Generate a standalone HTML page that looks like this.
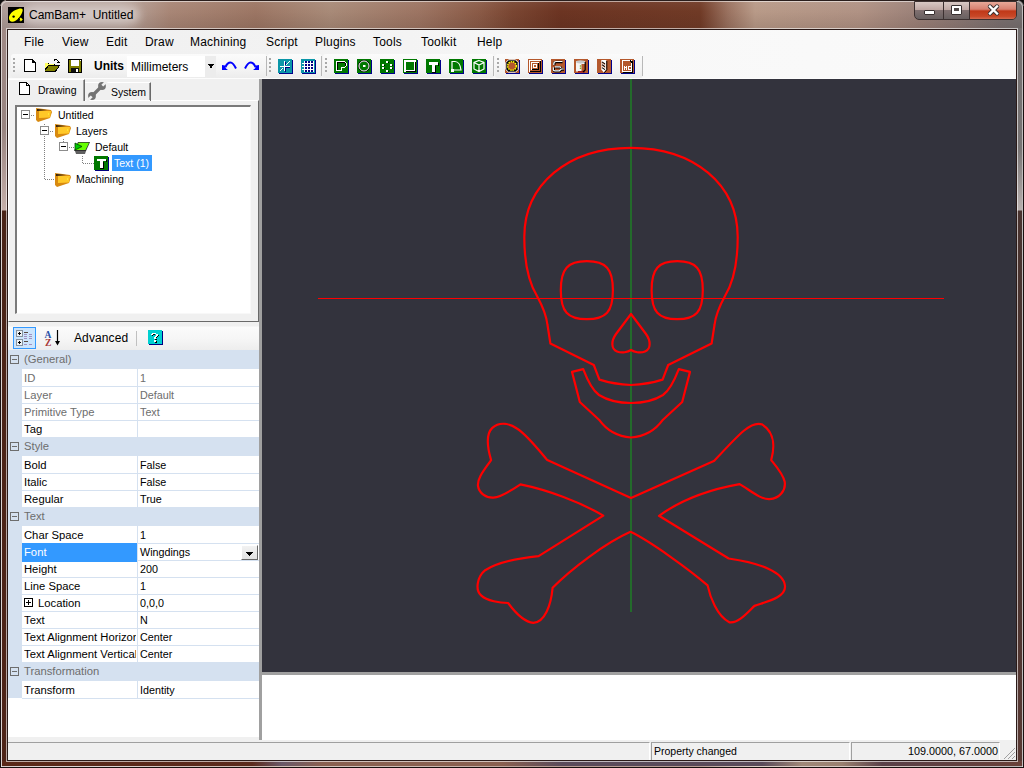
<!DOCTYPE html>
<html><head><meta charset="utf-8">
<style>
*{margin:0;padding:0;box-sizing:border-box}
html,body{width:1024px;height:768px;overflow:hidden;background:#000}
body{position:relative;font-family:"Liberation Sans",sans-serif;font-size:12px;color:#000}
.a{position:absolute}
.t{position:absolute;white-space:nowrap;line-height:14px;height:14px}
svg{position:absolute;overflow:visible}
#frame{left:0;top:0;width:1024px;height:768px;border-radius:7px 7px 0 0;
 background:linear-gradient(90deg,#ac9a96 0px,#b8a8a4 40px,#b8a69e 120px,#a88676 170px,#9c7664 256px,#a88a78 330px,#9c7462 420px,#8a5a46 480px,#7a4632 512px,#6c3422 560px,#703a26 700px,#9a7260 728px,#b89a88 755px,#b09284 860px,#9a8078 920px,#7a7070 1000px,#747070 1024px)}
.menu{top:30px;height:24px;left:8px;width:1008px;background:linear-gradient(90deg,#f0f0f0 0,#f2f2f2 300px,#f8f8f8 600px,#fafafa 1008px)}
.mi{position:absolute;top:35px;font-size:12px;line-height:14px;color:#000;white-space:nowrap;letter-spacing:0.2px}
.tb{position:absolute;top:54px;height:24px;background:linear-gradient(180deg,#fbfbfb 0,#f4f4f4 60%,#ececec 100%);border-radius:3px}
.tb:after{content:"";position:absolute;right:0;top:2px;width:1px;height:20px;background:#b8b8b8}
.grip{position:absolute;top:58px;width:2px;height:15px;background:repeating-linear-gradient(180deg,#a8a8a8 0,#a8a8a8 2px,transparent 2px,transparent 4px)}
.ic{position:absolute;top:59px;width:16px;height:16px}
.ic i{position:absolute;left:1px;top:1px;width:14px;height:14px;background:#00008a}
.ic b{position:absolute;left:0;top:0;width:14px;height:14px}
.g b{background:#007800}
.br b{background:#b4582c}
.tl b{background:#0a96a8}
.ic svg{left:0;top:0}
.gt{font-size:11.25px}
.gv{font-size:10.75px}
.gc{color:#6d6d6d}
</style></head><body>
<div id="frame" class="a"></div>
<!-- frame lines -->
<div class="a" style="left:0;top:0;width:1024px;height:29px;background:linear-gradient(180deg,rgba(255,255,255,.06) 0,rgba(0,0,0,0) 40%,rgba(40,20,15,.12) 100%)"></div>
<div class="a" style="left:6px;top:0;width:1012px;height:1px;background:#2a1e1c"></div>
<div class="a" style="left:22px;top:6px;width:118px;height:18px;border-radius:9px;background:rgba(235,228,225,.55);filter:blur(4px)"></div>
<div class="a" style="left:0;top:6px;width:1px;height:762px;background:#1a1010"></div>
<div class="a" style="left:1023px;top:6px;width:1px;height:762px;background:#1a1010"></div>
<div class="a" style="left:0;top:767px;width:1024px;height:1px;background:#1a1010"></div>
<div class="a" style="left:1px;top:1px;width:1022px;height:766px;border:1px solid rgba(255,255,255,.55);border-radius:6px 6px 0 0;border-bottom:none"></div>
<div class="a" style="left:1px;top:766px;width:1022px;height:1px;background:rgba(255,255,255,.5)"></div>
<!-- left/right/bottom frame color -->
<div class="a" style="left:2px;top:28px;width:5px;height:738px;background:linear-gradient(180deg,#a08a86 0,#988480 100px,#c4aea8 182px,#4a2418 183px,#4e2418 738px)"></div>
<div class="a" style="left:1017px;top:28px;width:5px;height:738px;background:linear-gradient(180deg,#747070 0,#787474 120px,#b8b0ae 182px,#4a3430 183px,#4a3430 500px,#5a3a34 738px)"></div>
<div class="a" style="left:2px;top:761px;width:1020px;height:5px;background:linear-gradient(90deg,#5a2818 0,#5c2a1c 250px,#6a5868 280px,#8a6050 320px,#8a6050 500px,#5a4a5a 560px,#5a4a5a 760px,#a08878 800px,#9a8070 840px,#5a4048 880px,#6a4038 1020px)"></div>
<div class="a" style="left:6px;top:28px;width:1012px;height:734px;border:1px solid rgba(255,255,255,.6)"></div>
<div class="a" style="left:7px;top:29px;width:1010px;height:732px;border:1px solid #2a1a18"></div>
<!-- client -->
<div class="a" style="left:8px;top:30px;width:1008px;height:730px;background:#f0f0f0"></div>

<!-- title -->
<div class="a" style="left:8px;top:7px;width:16px;height:16px;background:#000"></div>
<svg style="left:8px;top:7px" width="16" height="16" viewBox="0 0 16 16"><path d="M1 11.5 C0.8 8.5 3 5 7.5 3 C10.5 1.5 13.8 0.8 14.5 2.2 C15.2 3.8 13.5 7.5 11.5 10 C9.5 12.8 6.5 14.8 4.2 14.8 C2.2 14.8 1.2 13.3 1 11.5 Z" fill="#ffff00"/><circle cx="5.6" cy="9.6" r="1.2" fill="#000"/><path d="M12.8 10.6 L14.8 12.6 L12.8 14.6 L10.8 12.6 Z" fill="#ffff00"/><path d="M10.2 11.2 L12.2 13.2" stroke="#000" stroke-width="1"/></svg>
<div class="t" style="left:29px;top:8px;font-size:12px;color:#000">CamBam+&nbsp;&nbsp;Untitled</div>

<!-- caption buttons -->
<div class="a" style="left:914px;top:1px;width:103px;height:19px;border-radius:0 0 5px 5px;border:1px solid #3c3030;overflow:hidden;background:linear-gradient(180deg,#d8c8c4 0,#c0a8a4 45%,#807070 50%,#686060 100%)">
 <div class="a" style="left:28px;top:0;width:1px;height:18px;background:#3c3030"></div>
 <div class="a" style="left:54px;top:0;width:1px;height:18px;background:#3c3030"></div>
 <div class="a" style="left:55px;top:0;width:47px;height:18px;background:linear-gradient(180deg,#e8a898 0,#d88070 40%,#c03818 50%,#c84828 80%,#d87860 100%)"></div>
</div>
<div class="a" style="left:924px;top:10px;width:11px;height:5px;background:#fff;border:1px solid #383030;border-radius:1px"></div>
<div class="a" style="left:951px;top:5px;width:11px;height:10px;background:#fff;border:1px solid #383030;border-radius:1px"></div>
<div class="a" style="left:954px;top:8px;width:5px;height:3px;background:#504848"></div>
<svg style="left:987px;top:4px" width="14" height="12" viewBox="0 0 14 12"><path d="M3 2.5 L10 9.5 M10 2.5 L3 9.5" stroke="#383030" stroke-width="4.4" stroke-linecap="round"/><path d="M3 2.5 L10 9.5 M10 2.5 L3 9.5" stroke="#fff" stroke-width="2.4" stroke-linecap="square"/></svg>

<!-- menu -->
<div class="a menu"></div>
<div class="mi" style="left:24px">File</div>
<div class="mi" style="left:62px">View</div>
<div class="mi" style="left:106px">Edit</div>
<div class="mi" style="left:145px">Draw</div>
<div class="mi" style="left:190px">Machining</div>
<div class="mi" style="left:266px">Script</div>
<div class="mi" style="left:315px">Plugins</div>
<div class="mi" style="left:373px">Tools</div>
<div class="mi" style="left:421px">Toolkit</div>
<div class="mi" style="left:477px">Help</div>

<!-- toolbars -->
<div class="a" style="left:8px;top:54px;width:1008px;height:25px;background:linear-gradient(90deg,#f0f0f0 0,#f2f2f2 300px,#f8f8f8 600px,#fafafa 1008px)"></div>
<div class="a" style="left:8px;top:78px;width:1008px;height:1px;background:#fcfcfc"></div>
<div class="tb" style="left:11px;width:256px"></div>
<div class="tb" style="left:267px;width:55px"></div>
<div class="tb" style="left:323px;width:171px"></div>
<div class="tb" style="left:495px;width:148px"></div>
<div class="grip" style="left:13px"></div>
<div class="grip" style="left:269px"></div>
<div class="grip" style="left:325px"></div>
<div class="grip" style="left:497px"></div>
<!-- toolbar 1 icons -->
<svg style="left:24px;top:59px" width="12" height="13" viewBox="0 0 12 13" shape-rendering="crispEdges"><path d="M0.5 0.5 H8.5 L11.5 3.5 V12.5 H0.5 Z" fill="#fff" stroke="#000"/><path d="M8 1 h1 v1 h1 v1 h1 v1 h-3 z" fill="#000"/></svg>
<svg style="left:44px;top:58px" width="17" height="15" viewBox="0 0 17 15" shape-rendering="crispEdges">
<path d="M0.5 4.5 H3.5 L4.5 5.5 H10.5 V7.5 H15.5 L11.5 13.5 H0.5 Z" fill="#000"/>
<path d="M1 5 H3 L4 6 H10 V8 H4 L1 12 Z" fill="#ffff60"/>
<path d="M4 8 H15 L11 13 H1 Z" fill="#808000"/>
<path d="M0.5 12.5 L4.5 7.5 H15.5 L11.5 13.5 H0.5" fill="none" stroke="#000"/>
<path d="M9 2 h1 v-1 h3 v1 h1 v1 h1 v1 h1 v1 h-3 v-1 h1 v-1 h-1 v-1 h-2 v1 h-1 z" fill="#000"/>
</svg>
<svg style="left:68px;top:59px" width="15" height="14" viewBox="0 0 15 14" shape-rendering="crispEdges">
<rect x="0" y="0" width="14" height="14" fill="#000"/>
<rect x="1" y="1" width="12" height="12" fill="#808000"/>
<rect x="3" y="1" width="8" height="6" fill="#fff"/>
<rect x="3" y="9" width="8" height="4" fill="#101010"/>
<rect x="8" y="10" width="2" height="3" fill="#fff"/>
<rect x="12" y="1" width="1" height="1" fill="#fff"/>
</svg>
<div class="t" style="left:94px;top:59px;font-size:12px;font-weight:bold">Units</div>
<div class="a" style="left:127px;top:56px;width:89px;height:21px;background:#fff"></div>
<div class="a" style="left:205px;top:56px;width:11px;height:21px;background:#ececec"></div>
<svg style="left:208px;top:64px" width="6" height="4" viewBox="0 0 6 4" shape-rendering="crispEdges"><path d="M0 0 H6 V1 H5 V2 H4 V3 H2 V2 H1 V1 H0 Z M2 3 h2 v1 h-2z" fill="#000"/></svg>
<div class="t" style="left:131px;top:60px;font-size:12px">Millimeters</div>
<svg style="left:222px;top:61px" width="15" height="9" viewBox="0 0 15 9"><path d="M3.5 6 C5 2.5 7 1.5 8.5 1.5 C10 1.5 12 3.5 14 7.5" fill="none" stroke="#0000ff" stroke-width="2"/><path d="M0 4 L0 9 L6 9 L4 7.5 L3 4.5 Z" fill="#0000ff"/></svg>
<svg style="left:244px;top:61px" width="15" height="9" viewBox="0 0 15 9"><g transform="translate(15 0) scale(-1 1)"><path d="M3.5 6 C5 2.5 7 1.5 8.5 1.5 C10 1.5 12 3.5 14 7.5" fill="none" stroke="#0000ff" stroke-width="2"/><path d="M0 4 L0 9 L6 9 L4 7.5 L3 4.5 Z" fill="#0000ff"/></g></svg>
<!-- teal icons -->
<div class="ic tl" style="left:278px"><i></i><b></b><svg width="14" height="14" viewBox="0 0 14 14" shape-rendering="crispEdges"><path d="M6 2h1v10h-1z M2 7h10v1h-10z" fill="#fff"/><path d="M7 8h5v1h-5z M7 8h1v5h-1z" fill="#000080"/><path d="M11 2h1v1h-1v1h-1v1h-1v1h-1v-1h1v-1h1v-1h1z M2 12h1v-1h1v-1h1v-1h-1v1h-1v1h-1z" fill="#fff"/><path d="M7 3h1v3h-1z M3 7h-0z" fill="#000080"/></svg></div>
<div class="ic tl" style="left:301px"><i></i><b></b><svg width="14" height="14" viewBox="0 0 14 14" shape-rendering="crispEdges"><path d="M3 2h1v11h-1z M6 2h1v11h-1z M9 2h1v11h-1z M12 2h1v11h-1z M1 4h12v1h-12z M1 7h12v1h-12z M1 10h12v1h-12z" fill="#fff"/><path d="M4 5h2v2h-2z M7 5h2v2h-2z M10 5h2v2h-2z M4 8h2v2h-2z M7 8h2v2h-2z M10 8h2v2h-2z M4 11h2v2h-2z M7 11h2v2h-2z M10 11h2v2h-2z M4 2h2v2h-2z M7 2h2v2h-2z M10 2h2v2h-2z" fill="#000080"/></svg></div>
<!-- green icons -->
<div class="ic g" style="left:334px"><i></i><b></b><svg width="14" height="14" viewBox="0 0 14 14" shape-rendering="crispEdges"><path d="M3 3h8v1h-8z M3 4h1v7h-1z M11 4h1v3h-1z M7 9h1v2h-1z M8 8h3v1h-3z" fill="#000"/><path d="M2 2h9v1h-9z M11 3h1v1h-1z M12 4h1v3h-1z M11 7h1v1h-1z M8 8h3v1h-3z M7 8h1v4h-1z M2 11h5v1h-5z M2 3h1v8h-1z" fill="#fff"/></svg></div>
<div class="ic g" style="left:357px"><i></i><b></b><svg width="14" height="14" viewBox="0 0 14 14"><circle cx="7" cy="7" r="5.3" fill="none" stroke="#000" stroke-width="1.6"/><circle cx="7" cy="7" r="5" fill="none" stroke="#fff" stroke-width="1"/><rect x="6" y="6" width="2.5" height="2" fill="#fff"/></svg></div>
<div class="ic g" style="left:380px"><i></i><b></b><svg width="14" height="14" viewBox="0 0 14 14" shape-rendering="crispEdges"><path d="M6 2h2v2h-2z M2 5h2v2h-2z M10 5h2v2h-2z M2 8h2v2h-2z M10 8h2v2h-2z M6 11h2v2h-2z" fill="#fff"/><path d="M8 3h1v1h-1z M4 6h1v1h-1z M12 6h1v1h-1z M4 9h1v1h-1z M12 9h1v1h-1z M8 12h1v1h-1z" fill="#000"/></svg></div>
<div class="ic g" style="left:403px"><i></i><b></b><svg width="14" height="14" viewBox="0 0 14 14" shape-rendering="crispEdges"><path d="M2 2h10v10h-10z" fill="none" stroke="#fff" stroke-width="1.4"/><path d="M3 12h10v1h-10z M12 3h1v9h-1z" fill="#000"/></svg></div>
<div class="ic g" style="left:426px"><i></i><b></b><svg width="14" height="14" viewBox="0 0 14 14" shape-rendering="crispEdges"><path d="M3 3h9v3h-3v7h-3v-7h-3z" fill="#fff"/><path d="M12 4h1v3h-1z M9 7h1v7h-1z M6 13h3v1h-3z" fill="#000"/></svg></div>
<div class="ic g" style="left:449px"><i></i><b></b><svg width="14" height="14" viewBox="0 0 14 14"><path d="M3 11 V2.5 H6 C9 2.5 11.5 6 12 11 Z" fill="none" stroke="#fff" stroke-width="1.2"/><rect x="2" y="10" width="3" height="3" fill="#fff"/></svg></div>
<div class="ic g" style="left:472px"><i></i><b></b><svg width="14" height="14" viewBox="0 0 14 14"><path d="M7 1.5 L12 3.5 V10 L7 12.5 L2 10 V3.5 Z M2 3.5 L7 6 L12 3.5 M7 6 V12.5" fill="none" stroke="#fff" stroke-width="1.2"/></svg></div>
<!-- brown icons -->
<div class="ic br" style="left:505px"><i></i><b></b><svg width="14" height="14" viewBox="0 0 14 14"><path d="M3.5 0.8 H10.5 L13.2 3.5 V10.5 L10.5 13.2 H3.5 L0.8 10.5 V3.5 Z" fill="#000" stroke="#fff" stroke-width="1"/><circle cx="7" cy="7" r="4.3" fill="#b4582c" stroke="#ffff00" stroke-width="1.5" stroke-dasharray="1.5 0.8"/></svg></div>
<div class="ic br" style="left:528px"><i></i><b></b><svg width="14" height="14" viewBox="0 0 14 14" shape-rendering="crispEdges"><path d="M1 1h12v12h-12z" fill="#fff"/><path d="M2 2h11v11h-11z" fill="#000"/><path d="M2 2h10v10h-10z" fill="#b4582c"/><path d="M3 3h8v8h-8z" fill="#fff"/><path d="M4 4h7v7h-7z" fill="#000"/><path d="M4 4h6v6h-6z" fill="#b4582c"/><path d="M5 5h4v4h-4z" fill="#fff"/><path d="M6 6h2v2h-2z" fill="#b4582c"/></svg></div>
<div class="ic br" style="left:551px"><i></i><b></b><svg width="14" height="14" viewBox="0 0 14 14"><path d="M11.5 3 H5 Q3.3 3 3.3 5 V6.3 M4.3 8.2 H9 Q10.2 8.2 10.2 9.5 M2.8 8.5 V11 Q2.8 12.2 4.5 12.2 H8.5 L10.5 10.5 H13" fill="none" stroke="#000" stroke-width="2.4"/><path d="M11.5 2.5 H5 Q2.8 2.5 2.8 5 V6 M4 7.8 H9 Q9.8 7.8 9.8 9 M2.3 8.3 V10.8 Q2.3 11.8 4 11.8 H8.3 L10.3 10 H12.8" fill="none" stroke="#fff" stroke-width="1.2"/></svg></div>
<div class="ic br" style="left:574px"><i></i><b></b><svg width="14" height="14" viewBox="0 0 14 14"><path d="M2 2 H11 V12.5 H2 Z" fill="#f4f4f4"/><ellipse cx="6.5" cy="2.8" rx="4.5" ry="1.6" fill="#c8c8c8"/><path d="M7.5 5 H11 V12 H7.5Z" fill="#b4582c"/><path d="M4 12 H11 V13.5 H4Z" fill="#a01818"/><path d="M11.2 3 V11 L9 13" fill="none" stroke="#000" stroke-width="1.2"/><circle cx="6.5" cy="7" r="0.8" fill="#80a000"/><circle cx="6.5" cy="9.3" r="0.8" fill="#80a000"/></svg></div>
<div class="ic br" style="left:597px"><i></i><b></b><svg width="14" height="14" viewBox="0 0 14 14"><path d="M4.3 1 H9.3 V10.5 L6.8 13.5 L4.3 10.5 Z" fill="#fff"/><path d="M9.8 2 V10.8 L7.3 13.8" fill="none" stroke="#000" stroke-width="1"/><path d="M5 3 L8 5 M5 5.8 L8 7.8 M5 8.6 L8 10.6" stroke="#000" stroke-width="1.1"/><path d="M5 3.8 L8.5 6 M5 6.6 L8.5 8.8" stroke="#c06030" stroke-width="0.6"/></svg></div>
<div class="ic br" style="left:620px"><i></i><b></b><svg width="14" height="14" viewBox="0 0 14 14" shape-rendering="crispEdges"><path d="M2 1h10v12h-10z" fill="#fff"/><path d="M3 2h6l2 2v8h-8z" fill="#b4582c"/><path d="M9 2h1v1h1v1h1v-2h-1v-1z" fill="#000"/><path d="M12 2h1v12h-10v-1h9z" fill="#000"/><path d="M4 7h1v4h-1z M5 8h1v1h-1z M6 7h1v4h-1z M8 7h3v1h-2v2h2v1h-3z" fill="#fff"/></svg></div>

<!-- tab control -->
<div class="a" style="left:8px;top:100px;width:251px;height:222px;border-top:1px solid #fff;border-left:1px solid #fff;border-right:1px solid #696969;border-bottom:1px solid #696969;background:#f0f0f0"></div>
<!-- tabs -->
<div class="a" style="left:8px;top:79px;width:77px;height:22px;background:#f0f0f0;border-top:1px solid #fff;border-left:1px solid #fff;border-right:1px solid #696969"></div>
<div class="a" style="left:83px;top:80px;width:1px;height:21px;background:#a0a0a0"></div>
<div class="a" style="left:85px;top:82px;width:66px;height:19px;border-top:1px solid #fff;border-right:1px solid #696969"></div>
<div class="a" style="left:149px;top:83px;width:1px;height:17px;background:#a0a0a0"></div>
<svg style="left:19px;top:82px" width="12" height="13" viewBox="0 0 12 13" shape-rendering="crispEdges"><path d="M0.5 0.5 H7.5 L10.5 3.5 V12.5 H0.5 Z" fill="#fff" stroke="#000"/><path d="M7 1 h1 v2 h2 v1 h-3 z" fill="#000"/></svg>
<div class="t" style="left:38px;top:83px;font-size:10.5px">Drawing</div>
<svg style="left:86px;top:80px" width="22" height="22" viewBox="0 0 22 22"><path d="M7.5 14.5 L14.5 7.5" stroke="#737373" stroke-width="3.2"/><circle cx="16" cy="6" r="3.9" fill="#737373"/><circle cx="6" cy="16" r="3.9" fill="#737373"/><path d="M16.3 5.7 L21 1" stroke="#f0f0f0" stroke-width="2.6"/><path d="M5.7 16.3 L1 21" stroke="#f0f0f0" stroke-width="2.6"/></svg>
<div class="t" style="left:111px;top:85px;font-size:10.5px">System</div>
<!-- tree box -->
<div class="a" style="left:15px;top:105px;width:236px;height:209px;background:#fff;border-top:2px solid #7a7a7a;border-left:2px solid #7a7a7a;border-right:1px solid #f8f8f8;border-bottom:1px solid #f8f8f8"></div>
<!-- tree lines -->
<svg style="left:0;top:0" width="260" height="320" shape-rendering="crispEdges">
<g fill="#808080">
<path d="M31 115h1v1h-1z M33 115h1v1h-1z"/>
<path d="M50 131h1v1h-1z M52 131h1v1h-1z"/>
<path d="M69 147h1v1h-1z M71 147h1v1h-1z M73 147h1v1h-1z"/>
</g>
<path d="M44 124v56 M44 179h11 M63 139v3 M82 156v8 M82 163h12" stroke="#808080" stroke-width="1" stroke-dasharray="1 1" fill="none" transform="translate(0.5 0)"/>
<rect x="21.5" y="110.5" width="8" height="8" fill="#fff" stroke="#8c8c8c"/>
<rect x="40.5" y="126.5" width="8" height="8" fill="#fff" stroke="#8c8c8c"/>
<rect x="59.5" y="142.5" width="8" height="8" fill="#fff" stroke="#8c8c8c"/>
<path d="M23 114h5v1h-5z M42 130h5v1h-5z M61 146h5v1h-5z" fill="#000"/>
</svg>
<svg style="left:36px;top:107px" width="17" height="16" viewBox="0 0 17 16"><path d="M0 1 L15 3 L16 5 L14 11 L2 15 L0 13 Z" fill="#d88a10"/><path d="M1 2 L11 3 L1 4 Z" fill="#302010"/><path d="M3 4 H15 L14 10.5 L3 11 Z" fill="#ffc828"/><path d="M12 7 l1 -1 v2 z" fill="#ffff40"/></svg>
<svg style="left:55px;top:123px" width="17" height="16" viewBox="0 0 17 16"><path d="M0 1 L15 3 L16 5 L14 11 L2 15 L0 13 Z" fill="#d88a10"/><path d="M1 2 L11 3 L1 4 Z" fill="#302010"/><path d="M3 4 H15 L14 10.5 L3 11 Z" fill="#ffc828"/><path d="M12 7 l1 -1 v2 z" fill="#ffff40"/></svg>
<svg style="left:55px;top:172px" width="17" height="16" viewBox="0 0 17 16"><path d="M0 1 L15 3 L16 5 L14 11 L2 15 L0 13 Z" fill="#d88a10"/><path d="M1 2 L11 3 L1 4 Z" fill="#302010"/><path d="M3 4 H15 L14 10.5 L3 11 Z" fill="#ffc828"/><path d="M12 7 l1 -1 v2 z" fill="#ffff40"/></svg>
<svg style="left:74px;top:142px" width="17" height="13" viewBox="0 0 17 13"><path d="M4 0 H16 L12 9 H0 Z" fill="#303030"/><path d="M4.5 0.8 H15 L11.5 8 H1 Z" fill="#66ff00"/><path d="M1 1 L8 4.5 L1 8 Z" fill="#00c800" stroke="#004000" stroke-width="0.8"/><path d="M1 9 H12 L11 12 H2 Z" fill="#606060"/></svg>
<div class="a" style="left:95px;top:157px;width:14px;height:14px;background:#000080"></div>
<div class="a" style="left:94px;top:156px;width:14px;height:14px;background:#007800"></div>
<svg style="left:94px;top:156px" width="14" height="14" viewBox="0 0 14 14" shape-rendering="crispEdges"><path d="M4 4h8v1h-8z M12 4h1v2h-1z M9 6h1v7h-1z M6 12h3v1h-3z" fill="#000"/><path d="M3 3h9v2h-3v7h-3v-7h-3z" fill="#fff"/></svg>
<div class="t" style="left:58px;top:108px;font-size:10.5px">Untitled</div>
<div class="t" style="left:76px;top:124px;font-size:10.5px">Layers</div>
<div class="t" style="left:95px;top:140px;font-size:10.5px">Default</div>
<div class="a" style="left:112px;top:155px;width:40px;height:16px;background:#3399ff"></div>
<div class="t" style="left:114px;top:156px;font-size:10.5px;color:#fff">Text (1)</div>
<div class="t" style="left:76px;top:172px;font-size:10.5px">Machining</div>

<!-- property grid toolbar -->
<div class="a" style="left:8px;top:322px;width:251px;height:28px;background:linear-gradient(180deg,#f0f0f0 0,#f0f0f0 4px,#fbfbfb 5px,#f6f6f6 60%,#ededed 100%)"></div>
<div class="a" style="left:13px;top:327px;width:23px;height:22px;background:#cce4fc;border:1px solid #3399ff"></div>
<svg style="left:16px;top:330px" width="17" height="17" viewBox="0 0 17 17" shape-rendering="crispEdges">
<rect x="0.5" y="0.5" width="6" height="6" fill="#eef2f6" stroke="#8894a0"/><rect x="0.5" y="9.5" width="6" height="6" fill="#eef2f6" stroke="#8894a0"/>
<path d="M2 3h3v1h-3z M3 2h1v3h-1z M2 12h3v1h-3z M3 11h1v3h-1z" fill="#000"/>
<path d="M8 2h4v1h-4z M8 11h4v1h-4z" fill="#5a4a40"/>
<path d="M8 4h3v1h-3z M8 6h3v1h-3z M8 8h3v1h-3z M8 10h0z M8 14h3v1h-3z M13 4h3v1h-3z M13 6h3v1h-3z M13 8h3v1h-3z M13 14h3v1h-3z" fill="#a090c0"/>
</svg>
<svg style="left:44px;top:329px" width="16" height="18" viewBox="0 0 16 18"><text x="0.5" y="8.5" font-family="Liberation Serif" font-weight="bold" font-size="9.5" fill="#2850a8">A</text><text x="1" y="17" font-family="Liberation Serif" font-weight="bold" font-size="9.5" fill="#a83838">Z</text><path d="M13.5 1 V15" stroke="#000" stroke-width="1.2" fill="none"/><path d="M11 12 L13.5 16.5 L16 12 Z" fill="#000"/></svg>
<div class="t" style="left:74px;top:331px;font-size:12px;letter-spacing:0.1px">Advanced</div>
<div class="a" style="left:136px;top:331px;width:1px;height:15px;background:#c0c0c0"></div>
<div class="a" style="left:149px;top:331px;width:14px;height:14px;background:#000080"></div>
<div class="a" style="left:148px;top:330px;width:14px;height:14px;background:#00d0d0"></div>
<svg style="left:148px;top:330px" width="14" height="14" viewBox="0 0 14 14" shape-rendering="crispEdges"><path d="M5 4h2v1h-2z M4 5h1v1h-1z M10 5h1v1h-1z M9 6h1v1h-1z M8 7h1v1h-1z M8 8h0z M7 9h2v1h-2z M8 10h0v0z M7 12h2v1h-2z M8 11h1v1h-1z" fill="#000"/><path d="M4 3h4v1h-4z M3 4h2v1h-2z M8 4h2v2h-2z M7 6h2v1h-2z M6 7h2v2h-2z M6 10h2v2h-2z" fill="#fff"/></svg>

<div class="a" style="left:8px;top:350px;width:251px;height:387px;background:#fff"></div>
<div class="a" style="left:8px;top:350px;width:251px;height:19px;background:#d5e1f0"></div>
<svg style="left:10px;top:355px" width="9" height="9" viewBox="0 0 9 9" shape-rendering="crispEdges"><rect x="0.5" y="0.5" width="8" height="8" fill="none" stroke="#6d6d6d"/><path d="M2 4h5v1h-5z" fill="#6d6d6d"/></svg>
<div class="t gt gc" style="left:24px;top:352px">(General)</div>
<div class="a" style="left:8px;top:369px;width:14px;height:17px;background:#d5e1f0"></div>
<div class="a" style="left:137px;top:369px;width:1px;height:17px;background:#d5e1f0"></div>
<div class="t gt" style="left:24px;top:371px;width:112px;overflow:hidden;color:#6d6d6d">ID</div>
<div class="t gt gv" style="left:140px;top:371px;color:#6d6d6d">1</div>
<div class="a" style="left:8px;top:386px;width:14px;height:17px;background:#d5e1f0"></div>
<div class="a" style="left:22px;top:386px;width:237px;height:1px;background:#d5e1f0"></div>
<div class="a" style="left:137px;top:386px;width:1px;height:17px;background:#d5e1f0"></div>
<div class="t gt" style="left:24px;top:388px;width:112px;overflow:hidden;color:#6d6d6d">Layer</div>
<div class="t gt gv" style="left:140px;top:388px;color:#6d6d6d">Default</div>
<div class="a" style="left:8px;top:403px;width:14px;height:17px;background:#d5e1f0"></div>
<div class="a" style="left:22px;top:403px;width:237px;height:1px;background:#d5e1f0"></div>
<div class="a" style="left:137px;top:403px;width:1px;height:17px;background:#d5e1f0"></div>
<div class="t gt" style="left:24px;top:405px;width:112px;overflow:hidden;color:#6d6d6d">Primitive Type</div>
<div class="t gt gv" style="left:140px;top:405px;color:#6d6d6d">Text</div>
<div class="a" style="left:8px;top:420px;width:14px;height:17px;background:#d5e1f0"></div>
<div class="a" style="left:22px;top:420px;width:237px;height:1px;background:#d5e1f0"></div>
<div class="a" style="left:137px;top:420px;width:1px;height:17px;background:#d5e1f0"></div>
<div class="t gt" style="left:24px;top:422px;width:112px;overflow:hidden;color:#000">Tag</div>
<div class="t gt gv" style="left:140px;top:422px;color:#000"></div>
<div class="a" style="left:8px;top:437px;width:251px;height:19px;background:#d5e1f0"></div>
<svg style="left:10px;top:442px" width="9" height="9" viewBox="0 0 9 9" shape-rendering="crispEdges"><rect x="0.5" y="0.5" width="8" height="8" fill="none" stroke="#6d6d6d"/><path d="M2 4h5v1h-5z" fill="#6d6d6d"/></svg>
<div class="t gt gc" style="left:24px;top:439px">Style</div>
<div class="a" style="left:8px;top:456px;width:14px;height:17px;background:#d5e1f0"></div>
<div class="a" style="left:137px;top:456px;width:1px;height:17px;background:#d5e1f0"></div>
<div class="t gt" style="left:24px;top:458px;width:112px;overflow:hidden;color:#000">Bold</div>
<div class="t gt gv" style="left:140px;top:458px;color:#000">False</div>
<div class="a" style="left:8px;top:473px;width:14px;height:17px;background:#d5e1f0"></div>
<div class="a" style="left:22px;top:473px;width:237px;height:1px;background:#d5e1f0"></div>
<div class="a" style="left:137px;top:473px;width:1px;height:17px;background:#d5e1f0"></div>
<div class="t gt" style="left:24px;top:475px;width:112px;overflow:hidden;color:#000">Italic</div>
<div class="t gt gv" style="left:140px;top:475px;color:#000">False</div>
<div class="a" style="left:8px;top:490px;width:14px;height:17px;background:#d5e1f0"></div>
<div class="a" style="left:22px;top:490px;width:237px;height:1px;background:#d5e1f0"></div>
<div class="a" style="left:137px;top:490px;width:1px;height:17px;background:#d5e1f0"></div>
<div class="t gt" style="left:24px;top:492px;width:112px;overflow:hidden;color:#000">Regular</div>
<div class="t gt gv" style="left:140px;top:492px;color:#000">True</div>
<div class="a" style="left:8px;top:507px;width:251px;height:19px;background:#d5e1f0"></div>
<svg style="left:10px;top:512px" width="9" height="9" viewBox="0 0 9 9" shape-rendering="crispEdges"><rect x="0.5" y="0.5" width="8" height="8" fill="none" stroke="#6d6d6d"/><path d="M2 4h5v1h-5z" fill="#6d6d6d"/></svg>
<div class="t gt gc" style="left:24px;top:509px">Text</div>
<div class="a" style="left:8px;top:526px;width:14px;height:17px;background:#d5e1f0"></div>
<div class="a" style="left:137px;top:526px;width:1px;height:17px;background:#d5e1f0"></div>
<div class="t gt" style="left:24px;top:528px;width:112px;overflow:hidden;color:#000">Char Space</div>
<div class="t gt gv" style="left:140px;top:528px;color:#000">1</div>
<div class="a" style="left:8px;top:543px;width:14px;height:17px;background:#d5e1f0"></div>
<div class="a" style="left:22px;top:543px;width:237px;height:1px;background:#d5e1f0"></div>
<div class="a" style="left:137px;top:543px;width:1px;height:17px;background:#d5e1f0"></div>
<div class="a" style="left:22px;top:543px;width:115px;height:19px;background:#3399ff;z-index:1"></div>
<div class="t gt" style="left:24px;top:545px;color:#fff;z-index:2">Font</div>
<div class="a" style="left:241px;top:545px;width:17px;height:15px;background:linear-gradient(180deg,#f2f2f2,#e2e2e2);border-top:1px solid #fff;border-left:1px solid #fff;border-right:1px solid #696969;border-bottom:1px solid #696969"></div>
<svg style="left:246px;top:552px" width="7" height="4" viewBox="0 0 7 4" shape-rendering="crispEdges"><path d="M0 0h7v1h-1v1h-1v1h-1v1h-1v-1h-1v-1h-1v-1h-1z" fill="#000"/></svg>
<div class="t gt gv" style="left:140px;top:545px;color:#000">Wingdings</div>
<div class="a" style="left:8px;top:560px;width:14px;height:17px;background:#d5e1f0"></div>
<div class="a" style="left:22px;top:560px;width:237px;height:1px;background:#d5e1f0"></div>
<div class="a" style="left:137px;top:560px;width:1px;height:17px;background:#d5e1f0"></div>
<div class="t gt" style="left:24px;top:562px;width:112px;overflow:hidden;color:#000">Height</div>
<div class="t gt gv" style="left:140px;top:562px;color:#000">200</div>
<div class="a" style="left:8px;top:577px;width:14px;height:17px;background:#d5e1f0"></div>
<div class="a" style="left:22px;top:577px;width:237px;height:1px;background:#d5e1f0"></div>
<div class="a" style="left:137px;top:577px;width:1px;height:17px;background:#d5e1f0"></div>
<div class="t gt" style="left:24px;top:579px;width:112px;overflow:hidden;color:#000">Line Space</div>
<div class="t gt gv" style="left:140px;top:579px;color:#000">1</div>
<div class="a" style="left:8px;top:594px;width:14px;height:17px;background:#d5e1f0"></div>
<div class="a" style="left:22px;top:594px;width:237px;height:1px;background:#d5e1f0"></div>
<div class="a" style="left:137px;top:594px;width:1px;height:17px;background:#d5e1f0"></div>
<svg style="left:24px;top:598px" width="9" height="9" viewBox="0 0 9 9" shape-rendering="crispEdges"><rect x="0.5" y="0.5" width="8" height="8" fill="none" stroke="#000"/><path d="M2 4h5v1h-5z M4 2h1v5h-1z" fill="#000"/></svg>
<div class="t gt" style="left:38px;top:596px;color:#000">Location</div>
<div class="t gt gv" style="left:140px;top:596px;color:#000">0,0,0</div>
<div class="a" style="left:8px;top:611px;width:14px;height:17px;background:#d5e1f0"></div>
<div class="a" style="left:22px;top:611px;width:237px;height:1px;background:#d5e1f0"></div>
<div class="a" style="left:137px;top:611px;width:1px;height:17px;background:#d5e1f0"></div>
<div class="t gt" style="left:24px;top:613px;width:112px;overflow:hidden;color:#000">Text</div>
<div class="t gt gv" style="left:140px;top:613px;color:#000">N</div>
<div class="a" style="left:8px;top:628px;width:14px;height:17px;background:#d5e1f0"></div>
<div class="a" style="left:22px;top:628px;width:237px;height:1px;background:#d5e1f0"></div>
<div class="a" style="left:137px;top:628px;width:1px;height:17px;background:#d5e1f0"></div>
<div class="t gt" style="left:24px;top:630px;width:112px;overflow:hidden;color:#000">Text Alignment Horizontal</div>
<div class="t gt gv" style="left:140px;top:630px;color:#000">Center</div>
<div class="a" style="left:8px;top:645px;width:14px;height:17px;background:#d5e1f0"></div>
<div class="a" style="left:22px;top:645px;width:237px;height:1px;background:#d5e1f0"></div>
<div class="a" style="left:137px;top:645px;width:1px;height:17px;background:#d5e1f0"></div>
<div class="t gt" style="left:24px;top:647px;width:112px;overflow:hidden;color:#000">Text Alignment Vertical</div>
<div class="t gt gv" style="left:140px;top:647px;color:#000">Center</div>
<div class="a" style="left:8px;top:662px;width:251px;height:19px;background:#d5e1f0"></div>
<svg style="left:10px;top:667px" width="9" height="9" viewBox="0 0 9 9" shape-rendering="crispEdges"><rect x="0.5" y="0.5" width="8" height="8" fill="none" stroke="#6d6d6d"/><path d="M2 4h5v1h-5z" fill="#6d6d6d"/></svg>
<div class="t gt gc" style="left:24px;top:664px">Transformation</div>
<div class="a" style="left:8px;top:681px;width:14px;height:17px;background:#d5e1f0"></div>
<div class="a" style="left:137px;top:681px;width:1px;height:17px;background:#d5e1f0"></div>
<div class="t gt" style="left:24px;top:683px;width:112px;overflow:hidden;color:#000">Transform</div>
<div class="t gt gv" style="left:140px;top:683px;color:#000">Identity</div>
<div class="a" style="left:22px;top:698px;width:237px;height:1px;background:#d5e1f0"></div>
<div class="a" style="left:8px;top:737px;width:251px;height:3px;background:#f0f0f0"></div>

<!-- splitters -->
<div class="a" style="left:259px;top:79px;width:3px;height:661px;background:#a0a0a0"></div>
<div class="a" style="left:262px;top:79px;width:754px;height:593px;background:#33333d;overflow:hidden">
<svg style="left:0;top:0" width="754" height="593" viewBox="262 79 754 593">
<rect x="630" y="79" width="2" height="533" fill="#236b2b"/>
<rect x="318" y="298" width="626" height="1" fill="#ff0000"/>
<g fill="none" stroke="#ff0000" stroke-width="2.2" stroke-linejoin="round">
<!-- SKULL -->
<path d="M631.0 147.8 C568.0 147.8 524.3 184.4 524.3 237.0 C524.3 262.0 528.5 282.0 537.0 296.0 C543.0 307.0 546.5 316.0 547.5 325.0 L550.4 343.5 L593.8 365.0 L599.4 379.6 C610.0 383.0 620.0 384.5 631.0 385.0 C642.0 384.5 652.0 383.0 662.6 379.6 L668.2 365.0 L711.6 343.5 L714.5 325.0 C715.5 316.0 719.0 307.0 725.0 296.0 C733.5 282.0 737.7 262.0 737.7 237.0 C737.7 184.4 694.0 147.8 631.0 147.8 Z"/>
<path d="M631.0 314.0 L616.0 334.0 C611.0 341.0 611.0 349.0 617.0 351.5 C622.0 353.5 628.0 352.0 631.0 350.0 C634.0 352.0 640.0 353.5 645.0 351.5 C651.0 349.0 651.0 341.0 646.0 334.0 L631.0 314.0 Z"/>
<path d="M631.0 403.0 C620.0 403.0 607.0 400.0 599.0 395.0 C592.0 390.0 587.0 379.0 583.2 369.1 L572.0 371.9 L579.8 402.0 L599.0 419.7 C605.0 428.0 614.0 436.5 631.0 437.5 C648.0 436.5 657.0 428.0 663.0 419.7 L682.2 402.0 L690.0 371.9 L678.8 369.1 C675.0 379.0 670.0 390.0 663.0 395.0 C655.0 400.0 642.0 403.0 631.0 403.0 Z"/>
<path d="M631 498 L547.3 460.1 C538 449 526 434 516.9 428.5 C510 424 500 421 492.3 427.9 C486 434 487.5 448 491.1 460.1 C485 469 477 478 478 486 C479 493 486 498 493.4 497.6 C502 497 512 490 520.4 484.4 C548 490 580 502 603.3 515.6 L538.6 556.1 C520 558 498 562 485.2 570.2 C477 577 475 590 481.1 595.4 C487 601 500 603 508.1 603 C514 611 524 622 533.3 622.9 C545 622 551 605 552.6 587.8 C570 570 605 543 630.5 531.8 C650 541 690 570 707.6 585.4 C710 597 717 616 729.3 622.3 C738 624 748 612 754.5 605.9 C765 602 786 598 785 586 C784 572 760 563 728.7 558.5 L659 515.8 C685 497 712 489 739.6 484.1 C750 490 760 499.5 769.5 499.1 C780 498.5 786 490 784.7 481.8 C783 474 776 466 771.2 460.1 C774 450 776 433 762.4 424.6 C752 420 740 433 714.4 460.7 Z"/>
<path d="M586.8 261.2 C567.6 261.2 560.8 268.8 560.8 290.2 C560.8 311.7 567.6 319.2 586.8 319.2 C606.1 319.2 612.9 311.7 612.9 290.2 C612.9 268.8 606.1 261.2 586.8 261.2 Z"/>
<path d="M677.2 261.2 C658.3 261.2 651.6 268.8 651.6 290.2 C651.6 311.7 658.3 319.2 677.2 319.2 C696.1 319.2 702.8 311.7 702.8 290.2 C702.8 268.8 696.1 261.2 677.2 261.2 Z"/>
</g>
</svg>
</div>
<div class="a" style="left:262px;top:672px;width:754px;height:3px;background:#a0a0a0"></div>
<div class="a" style="left:262px;top:675px;width:754px;height:65px;background:#fff"></div>


<!-- status bar -->
<div class="a" style="left:8px;top:740px;width:1008px;height:20px;background:#f0f0f0"></div>
<div class="a" style="left:8px;top:742px;width:642px;height:18px;border-top:1px solid #a0a0a0;border-right:1px solid #fff"></div>
<div class="a" style="left:651px;top:742px;width:199px;height:18px;border-top:1px solid #a0a0a0;border-left:1px solid #a0a0a0;border-right:1px solid #fff"></div>
<div class="a" style="left:851px;top:742px;width:149px;height:18px;border-top:1px solid #a0a0a0;border-left:1px solid #a0a0a0;border-right:1px solid #fff"></div>
<div class="t" style="left:654px;top:744px;font-size:10.5px">Property changed</div>
<div class="t" style="left:850px;width:148px;text-align:right;top:744px;font-size:10.8px">109.0000, 67.0000</div>
<svg style="left:1003px;top:747px" width="13" height="13" viewBox="0 0 13 13" shape-rendering="crispEdges">
<g fill="#a0a0a0"><path d="M11 1h1v1h-1z M10 2h1v1h-1z M9 3h1v1h-1z M8 4h1v1h-1z M7 5h1v1h-1z M6 6h1v1h-1z M5 7h1v1h-1z M4 8h1v1h-1z M3 9h1v1h-1z M2 10h1v1h-1z M1 11h1v1h-1z"/>
<path d="M11 5h1v1h-1z M10 6h1v1h-1z M9 7h1v1h-1z M8 8h1v1h-1z M7 9h1v1h-1z M6 10h1v1h-1z M5 11h1v1h-1z"/>
<path d="M11 9h1v1h-1z M10 10h1v1h-1z M9 11h1v1h-1z"/></g>
</svg>

</body></html>
